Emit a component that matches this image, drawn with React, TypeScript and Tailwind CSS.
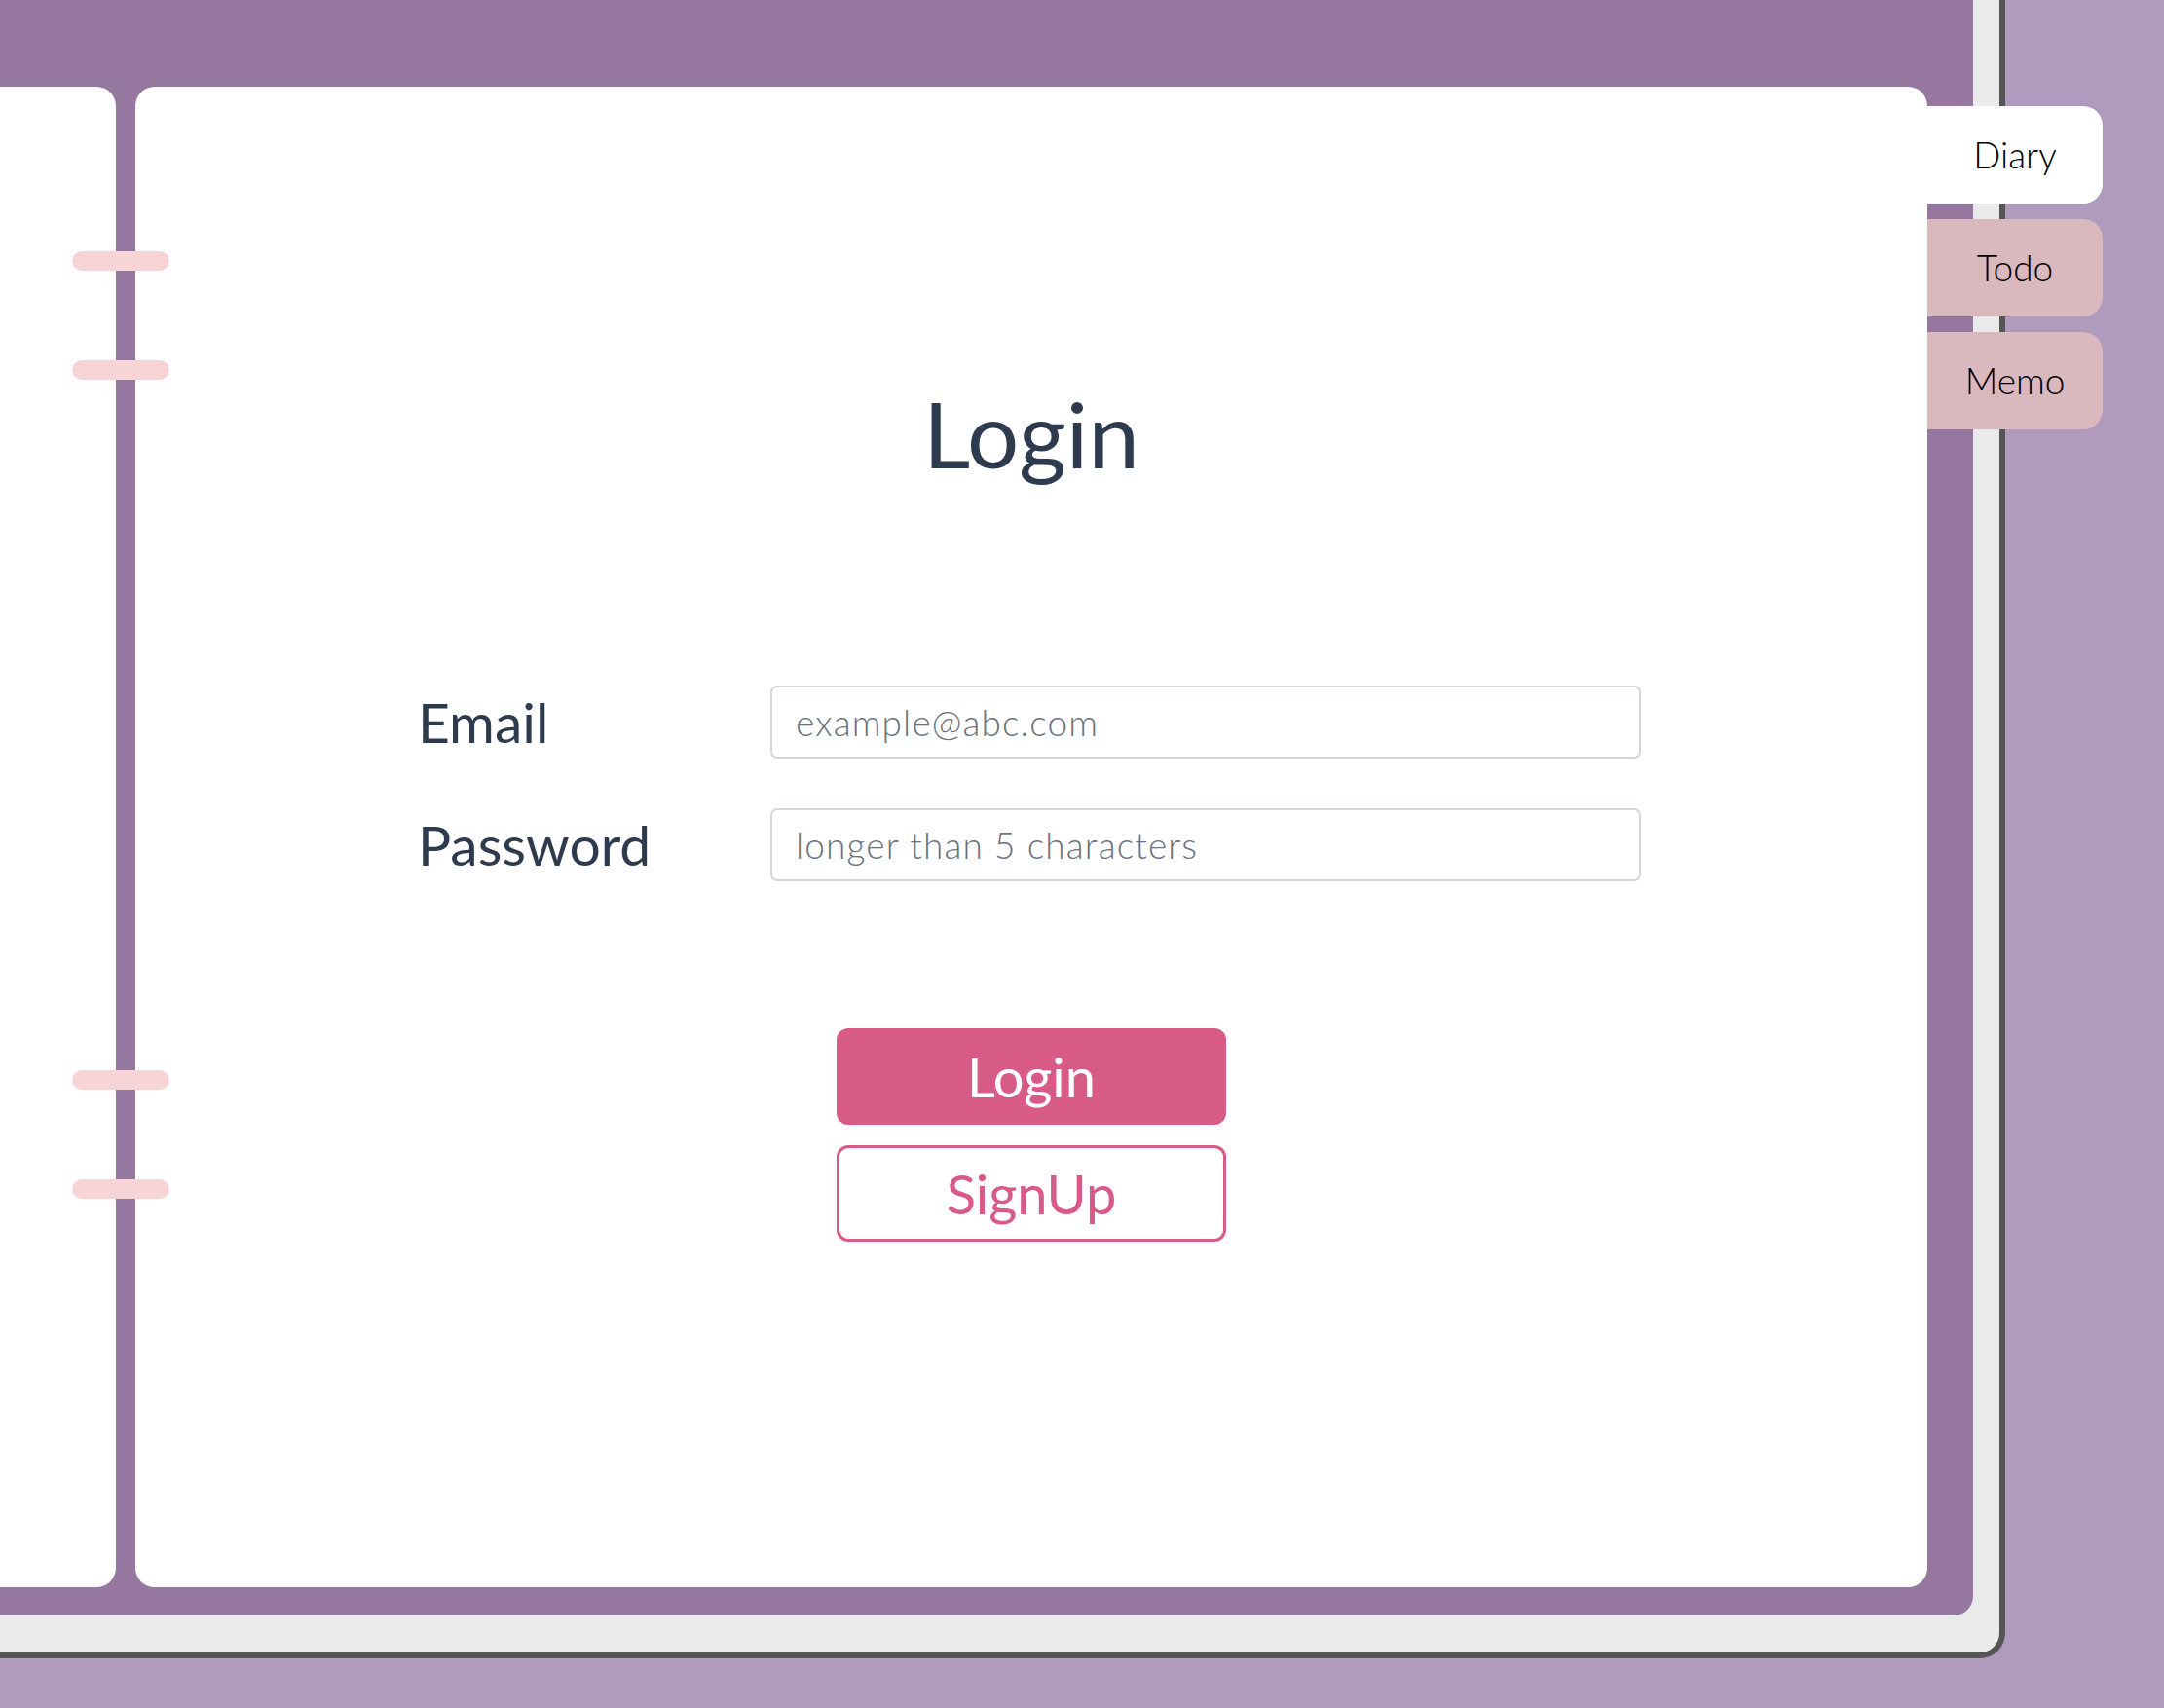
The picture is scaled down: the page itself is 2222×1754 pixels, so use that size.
import React, { FunctionComponent } from "react";

const font = { fontFamily: "Lato, 'Noto Sans', sans-serif" };

const Ring: FunctionComponent<{ top: string }> = ({ top }) => (
  <div className={`absolute left-[74px] w-[100px] h-[20px] rounded-full bg-[#f7d4d5] ${top}`} />
);

const Field: FunctionComponent<{ label: string; placeholder: string; type?: string }> = ({
  label,
  placeholder,
  type = "text",
}) => (
  <div className="flex flex-row items-center">
    <label className="w-[362px] shrink-0 text-[57px] leading-none text-[#2e3a4d]">{label}</label>
    <input
      type={type}
      placeholder={placeholder}
      className="w-[894px] h-[75px] border-2 border-[#d3d6db] rounded-[7px] px-[24px] text-[37px] tracking-[0.03em] font-light text-[#2e3a4d] placeholder:text-[#6b7280] outline-none"
    />
  </div>
);

const tabs = [
  { name: "Diary", active: true },
  { name: "Todo", active: false },
  { name: "Memo", active: false },
];

export default function App() {
  return (
    <div className="w-full min-h-screen bg-[#b09abd]" style={font}>
      <div className="w-[2059px] h-[1703px] bg-[#eaeaea] border-r-[6px] border-b-[6px] border-[#555555] rounded-br-[26px] pr-[27px] pb-[38px]">
        <div className="relative h-full bg-[#9677a0] rounded-br-[20px] flex flex-row pt-[89px] pb-[29px]">
          {/* left page */}
          <div className="w-[119px] shrink-0 bg-white rounded-r-[20px]" />
          {/* spine */}
          <div className="w-[20px] shrink-0" />
          {/* right page */}
          <div className="w-[1840px] shrink-0 bg-white rounded-[20px] flex flex-col items-center pt-[309px]">
            <h1 className="text-[94px] leading-none text-[#2e3a4d]">Login</h1>
            <form className="mt-[212px] -ml-[4px] flex flex-col gap-[51px]" onSubmit={(e) => e.preventDefault()}>
              <Field label="Email" placeholder="example@abc.com" />
              <Field label="Password" placeholder="longer than 5 characters" type="password" />
            </form>
            <div className="mt-[151px] flex flex-col gap-[21px]">
              <button className="w-[400px] h-[99px] rounded-[12px] bg-[#d85a87] text-white text-[56px] leading-none">
                Login
              </button>
              <button className="w-[400px] h-[99px] rounded-[12px] border-[3px] border-[#d85a87] bg-white text-[#d85a87] text-[56px] leading-none">
                SignUp
              </button>
            </div>
          </div>
          {/* tabs */}
          <div className="w-[180px] shrink-0 mt-[20px] flex flex-col gap-[16px]">
            {tabs.map((tab) => (
              <div
                key={tab.name}
                className={
                  tab.active
                    ? "h-[100px] rounded-r-[20px] bg-white flex items-center justify-center text-[37px] font-light text-black"
                    : "h-[100px] rounded-r-[20px] bg-[#dab9be] flex items-center justify-center text-[37px] font-light text-black"
                }
              >
                {tab.name}
              </div>
            ))}
          </div>
          {/* binder rings */}
          <Ring top="top-[258px]" />
          <Ring top="top-[370px]" />
          <Ring top="top-[1099px]" />
          <Ring top="top-[1211px]" />
        </div>
      </div>
    </div>
  );
}
